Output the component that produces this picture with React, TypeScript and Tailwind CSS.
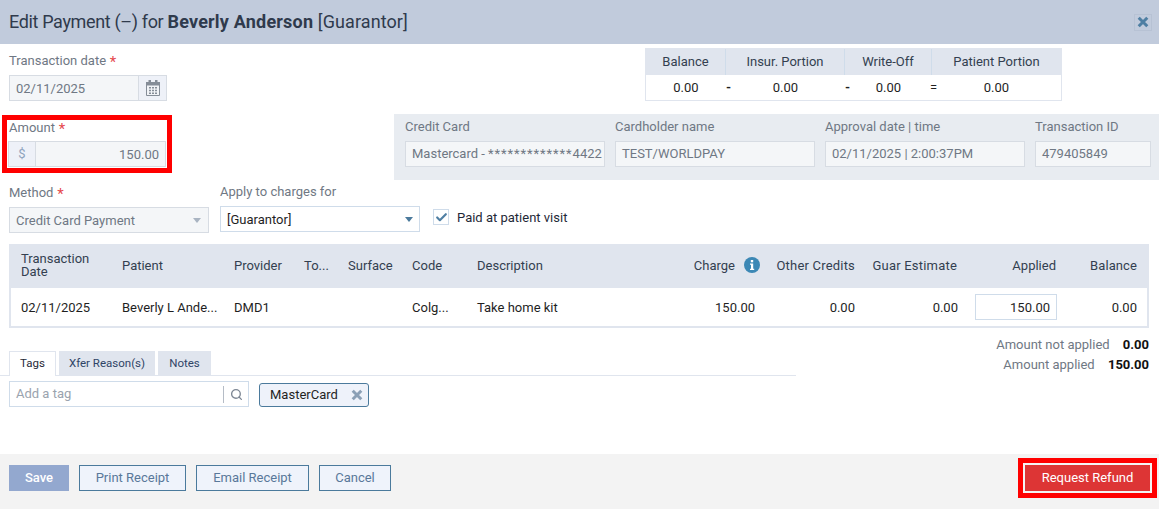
import type { ReactNode } from "react";
import { Check, Search } from "lucide-react";

function Calendar() {
  return (
    <svg width="14" height="16" viewBox="0 0 14 16" fill="none">
      <path d="M.5 2.500h13v13H.5z" fill="#f1f3f7" stroke="#858d98" />
      <path d="M0 2h14v3.500H0z" fill="#858d98" />
      <path d="M2.500 0h2.500v3H2.500zM9 0h2.500v3H9z" fill="#858d98" />
      <path d="M3 7h2v1.600H3zM6 7h2v1.600H6zM9 7h2v1.600H9zM3 9.700h2v1.600H3zM6 9.700h2v1.600H6zM9 9.700h2v1.600H9zM3 12.400h2V14H3zM6 12.400h2V14H6zM9 12.400h2V14H9z" fill="#858d98" />
    </svg>
  );
}

function Caret({ color }: { color: string }) {
  return (
    <svg width="8" height="5" viewBox="0 0 8 5">
      <path d="M0 0h8L4 5z" fill={color} />
    </svg>
  );
}

function BoldX({ color, size }: { color: string; size: number }) {
  return (
    <svg width={size} height={size} viewBox="0 0 12 12">
      <path d="M1.700 1.700l8.600 8.600M10.300 1.700l-8.600 8.600" stroke={color} strokeWidth="3" fill="none" />
    </svg>
  );
}

function Req() {
  return <span className="relative top-[2px] text-[15px] text-[#e5484d]"> *</span>;
}

function ReadOnly({ label, children, w }: { label: string; children: ReactNode; w: string }) {
  return (
    <div className={`flex flex-col gap-[6px] ${w}`}>
      <span className="text-[13px] leading-[16px] text-[#6f7884]">{label}</span>
      <div className="h-[26px] border border-[#d7dce3] bg-[#f4f6f8] px-[6px] text-[13px] leading-[24px] text-[#6f7884] whitespace-nowrap overflow-hidden">
        {children}
      </div>
    </div>
  );
}

const cols = "grid grid-cols-[101px_112px_70px_44px_64px_65px_170px_108px_100px_103px_99px_80px]";

export default function App() {
  return (
    <div className="w-[1159px] h-[509px] bg-white overflow-hidden flex flex-col text-[13px] text-[#1f2937] [font-family:Roboto,'Liberation_Sans',sans-serif]">
      <header className="h-[44px] shrink-0 bg-[#c1cbdc] flex items-center justify-between pl-[9px] pr-[7px]">
        <h1 className="text-[18px] text-[#2f3a4c] leading-[24px]">
          <span className="tracking-[-0.35px]">Edit Payment (–) for </span>
          <b className="font-bold tracking-[0.2px]">Beverly Anderson</b>
          <span className="tracking-[0.1px]"> [Guarantor]</span>
        </h1>
        <button className="w-[18px] h-[17px] flex items-center justify-center border border-[#b7c2d4]">
          <BoldX color="#4f7fa3" size={12} />
        </button>
      </header>

      <div className="h-[70px] shrink-0 flex justify-between pl-[9px] pr-[97px]">
        <div className="pt-[8px]">
          <div className="h-[17px] text-[13px] leading-[16px] text-[#6f7884]">Transaction date<Req /></div>
          <div className="mt-[6px] flex h-[26px] w-[158px]">
            <div className="flex-1 border border-[#d7dce3] bg-[#f4f6f8] px-[6px] leading-[25px] text-[#6f7884]">02/11/2025</div>
            <div className="w-[28px] border border-l-0 border-[#d7dce3] bg-[#eef1f8] flex items-center justify-center">
              <Calendar />
            </div>
          </div>
        </div>
        <div className="mt-[4px] w-[417px] h-[53px] border border-[#e0e5ee] self-start">
          <div className="h-[26px] bg-[#e0e5ee] flex text-[#333f50] leading-[26px] text-center">
            <div className="w-[80px] border-r border-[#cfdcea]">Balance</div>
            <div className="w-[119px] border-r border-[#cfdcea]">Insur. Portion</div>
            <div className="w-[87px] border-r border-[#cfdcea]">Write-Off</div>
            <div className="flex-1">Patient Portion</div>
          </div>
          <div className="h-[25px] flex leading-[25px] text-center text-[#1f1f1f]">
            <div className="w-[80px]">0.00</div>
            <div className="w-[119px] relative">
              <span className="absolute left-0 top-0 font-bold">-</span>0.00
            </div>
            <div className="w-[87px] relative">
              <span className="absolute left-0 top-0 font-bold">-</span>0.00
            </div>
            <div className="flex-1 relative">
              <span className="absolute -left-[2px] top-0">=</span>0.00
            </div>
          </div>
        </div>
      </div>

      <div className="h-[70px] shrink-0 flex items-start justify-between pl-[2px]">
        <div className="mt-[1px] w-[170px] h-[58px] border-[5px] border-[#ff0000] pl-[1px] pr-[1px]">
          <div className="h-[16px] -mt-[1px] pl-[1px] leading-[16px] text-[#6f7884]">Amount<Req /></div>
          <div className="mt-[6px] flex h-[26px]">
            <div className="w-[28px] border border-[#d7dce3] bg-[#eef1f8] text-center leading-[24px] text-[#8fa3bd]">$</div>
            <div className="flex-1 border border-l-0 border-[#d7dce3] bg-[#f4f6f8] px-[6px] text-right leading-[25px] text-[#6f7884]">150.00</div>
          </div>
        </div>
        <div className="w-[765px] h-[66px] bg-[#e8ecf1] flex gap-[10px] pl-[11px] pt-[5px]">
          <ReadOnly label="Credit Card" w="w-[200px]">
            Mastercard - <span className="tracking-[0.9px]">*************</span>4422
          </ReadOnly>
          <ReadOnly label="Cardholder name" w="w-[200px]">TEST/WORLDPAY</ReadOnly>
          <ReadOnly label="Approval date | time" w="w-[200px]">02/11/2025 | 2:00:37PM</ReadOnly>
          <ReadOnly label="Transaction ID" w="w-[116px]">479405849</ReadOnly>
        </div>
      </div>

      <div className="h-[60px] shrink-0 flex pl-[9px] items-start">
        <div className="w-[200px]">
          <div className="h-[16px] leading-[16px] text-[#6f7884]">Method<Req /></div>
          <div className="mt-[7px] h-[26px] border border-[#d7dce3] bg-[#f4f6f8] pl-[6px] pr-[7px] pt-[1px] flex items-center justify-between leading-[24px] text-[#6f7884]">
            Credit Card Payment
            <Caret color="#a9b4c2" />
          </div>
        </div>
        <div className="ml-[11px] w-[200px]">
          <div className="h-[16px] leading-[16px] text-[#6f7884]">Apply to charges for</div>
          <div className="mt-[6px] h-[26px] border border-[#cfdcea] bg-white pl-[6px] pr-[6px] pt-[1px] flex items-center justify-between leading-[24px] text-[#1f1f1f]">
            [Guarantor]
            <Caret color="#4b7a9c" />
          </div>
        </div>
        <div className="ml-[13px] mt-[25px] h-[16px] flex items-center gap-[8px] text-[#1f2937]">
          <div className="w-[16px] h-[16px] border border-[#cfdcea] flex items-center justify-center">
            <Check size={13} strokeWidth={4} className="text-[#4f7fa3]" />
          </div>
          <span className="pt-[2px]">Paid at patient visit</span>
        </div>
      </div>

      <div className="shrink-0 ml-[9px] w-[1140px] border-x-2 border-b-2 border-[#e0e5ee]">
        <div className={`${cols} h-[44px] bg-[#e0e5ee] items-center pl-[12px] pb-[2px] text-[#333f50] leading-[13px] -mx-[2px]`}>
          <div>Transaction<br />Date</div>
          <div>Patient</div>
          <div>Provider</div>
          <div>To...</div>
          <div>Surface</div>
          <div>Code</div>
          <div>Description</div>
          <div className="flex items-center justify-end gap-[9px] -mr-[5px]">
            Charge
            <svg width="16" height="16" viewBox="0 0 16 16" className="shrink-0">
              <circle cx="8" cy="8" r="8" fill="#3c88b5" />
              <rect x="6.800" y="3" width="2.400" height="2.300" fill="#fff" />
              <path d="M6 6.500h3.200v5.200h1V13H6v-1.300h1V7.800H6z" fill="#fff" />
            </svg>
          </div>
          <div className="text-right tracking-[0.2px]">Other Credits</div>
          <div className="text-right tracking-[0.2px] pr-[1px]">Guar Estimate</div>
          <div className="text-right pr-[1px]">Applied</div>
          <div className="text-right tracking-[0.1px]">Balance</div>
        </div>
        <div className={`${cols} h-[38px] items-center pl-[12px] pt-[2px] text-[#1f1f1f] -mx-[2px]`}>
          <div>02/11/2025</div>
          <div>Beverly L Ande...</div>
          <div>DMD1</div>
          <div />
          <div />
          <div>Colg...</div>
          <div>Take home kit</div>
          <div className="text-right">150.00</div>
          <div className="text-right">0.00</div>
          <div className="text-right">0.00</div>
          <div className="justify-self-end -mt-[2px] w-[82px] h-[26px] border border-[#cfdcea] text-right pr-[6px] leading-[25px]">150.00</div>
          <div className="text-right">0.00</div>
        </div>
      </div>

      <div className="flex-1 relative flex flex-col justify-start">
        <div className="absolute right-[10px] top-[7px] text-right leading-[20px] text-[#6f7884]">
          <div>Amount not applied <b className="inline-block ml-[10px] text-[#111]">0.00</b></div>
          <div>Amount applied <b className="inline-block ml-[10px] text-[#111]">150.00</b></div>
        </div>
        <div className="mt-[23px] w-[796px] h-[25px] border-b border-[#e0e5ee] flex gap-[3px] pl-[9px] text-[11.500px] leading-[24px]">
          <div className="w-[47px] h-[25px] border border-b-0 border-[#e0e5ee] bg-white text-center leading-[22px] text-[#1f2937]">Tags</div>
          <div className="w-[96px] bg-[#e0e5ee] text-center text-[#2f4466]">Xfer Reason(s)</div>
          <div className="w-[53px] bg-[#e0e5ee] text-center text-[#2f4466]">Notes</div>
        </div>
        <div className="flex items-start pl-[9px] mt-[5px]">
          <div className="w-[240px] h-[26px] border border-[#cfdcea] flex items-center pl-[6px] text-[#9aa3ae]">
            <span className="flex-1">Add a tag</span>
            <span className="h-[17px] border-l border-[#b5bcc6] w-[25px] flex items-center justify-center">
              <Search size={13} strokeWidth={2.5} className="text-[#7d8794]" />
            </span>
          </div>
          <div className="ml-[10px] mt-[2px] w-[110px] h-[24px] rounded-[3px] border border-[#4b7a9c] bg-[#eef2fa] flex items-center justify-between pl-[10px] pr-[5px] pb-[1px] text-[#1f1f1f]">
            MasterCard
            <BoldX color="#8ba0b6" size={12} />
          </div>
        </div>
      </div>

      <footer className="h-[55px] shrink-0 bg-[#f3f3f3] flex items-start justify-between pl-[9px] pr-[2px] pt-[4px]">
        <div className="flex gap-[10px] pt-[7px]">
          <button className="w-[60px] h-[26px] bg-[#93a8cf] text-white font-medium">Save</button>
          <button className="w-[107px] h-[26px] border border-[#4b7a9c] bg-[#eff3fb] text-[#59789a]">Print Receipt</button>
          <button className="w-[113px] h-[26px] border border-[#4b7a9c] bg-[#eff3fb] text-[#59789a]">Email Receipt</button>
          <button className="w-[72px] h-[26px] border border-[#4b7a9c] bg-[#eff3fb] text-[#59789a]">Cancel</button>
        </div>
        <div className="w-[139px] h-[40px] border-[5px] border-[#ff0000] p-[2px]">
          <button className="w-full h-full bg-[#dd3535] text-white">Request Refund</button>
        </div>
      </footer>
    </div>
  );
}
